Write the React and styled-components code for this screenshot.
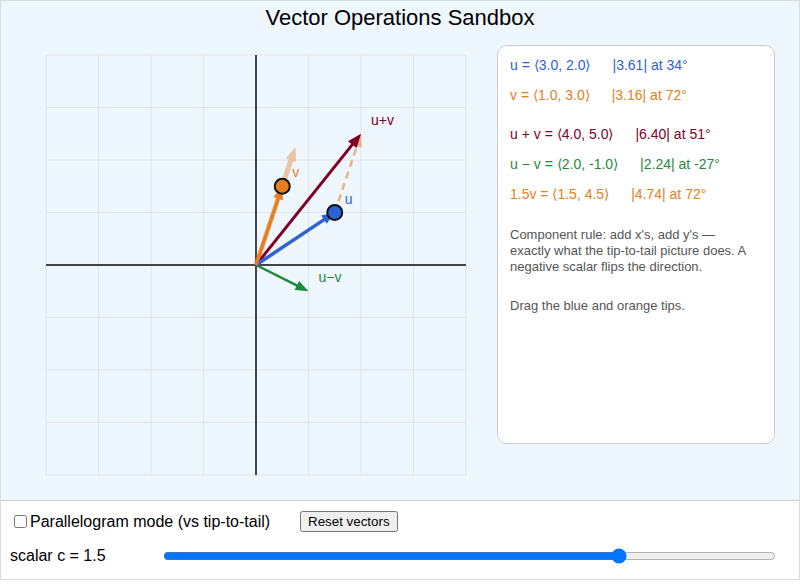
import React, { useState } from 'react'
import styled, { createGlobalStyle } from 'styled-components'

const GlobalStyle = createGlobalStyle`
  html, body {
    margin: 0;
    padding: 0;
    background: #fff;
  }
  body {
    font-family: "Liberation Sans", Arial, sans-serif;
  }
`

const COLORS = {
  u: '#2d62d4',
  v: '#e67e22',
  sum: '#800026',
  diff: '#1f8a3c',
  hint: '#555',
}

// plot: 440px square, grid inset by 10px, 8 cells of 2 units each
const SIZE = 440
const INSET = 10
const SCALE = 26.25
const CENTER = SIZE / 2

const toPx = ([x, y]) => [CENTER + x * SCALE, CENTER - y * SCALE]

const fmt = (n) => n.toFixed(1)
const mag = ([x, y]) => Math.hypot(x, y).toFixed(2)
const angle = ([x, y]) => Math.round((Math.atan2(y, x) * 180) / Math.PI)

const START_U = [3, 2]
const START_V = [1, 3]

const Arrow = ({ from, to, color, width = 3, head = 13, headWidth = 10, dash, opacity = 1 }) => {
  const dx = to[0] - from[0]
  const dy = to[1] - from[1]
  const len = Math.hypot(dx, dy) || 1
  const ux = dx / len
  const uy = dy / len
  const bx = to[0] - ux * head
  const by = to[1] - uy * head
  const px = -uy * (headWidth / 2)
  const py = ux * (headWidth / 2)
  const points = `${to[0]},${to[1]} ${bx + px},${by + py} ${bx - px},${by - py}`
  return (
    <g opacity={opacity}>
      <line
        x1={from[0]}
        y1={from[1]}
        x2={bx + ux * 2}
        y2={by + uy * 2}
        stroke={color}
        strokeWidth={width}
        strokeDasharray={dash}
      />
      <polygon points={points} fill={color} />
    </g>
  )
}

const Label = ({ at, color, children }) => (
  <text
    x={at[0] + 10}
    y={at[1] - 9}
    fill={color}
    fontSize="14"
    fontFamily='"Liberation Sans", Arial, sans-serif'
  >
    {children}
  </text>
)

const Plot = ({ u, v, c, parallelogram }) => {
  const sum = [u[0] + v[0], u[1] + v[1]]
  const diff = [u[0] - v[0], u[1] - v[1]]
  const scaled = [v[0] * c, v[1] * c]
  const o = toPx([0, 0])
  const pu = toPx(u)
  const pv = toPx(v)
  const ps = toPx(sum)
  const pd = toPx(diff)
  const pc = toPx(scaled)

  const lines = []
  for (let i = 0; i <= 8; i++) {
    const p = INSET + i * 52.5
    lines.push(<line key={`v${i}`} x1={p} y1={INSET} x2={p} y2={SIZE - INSET} />)
    lines.push(<line key={`h${i}`} x1={INSET} y1={p} x2={SIZE - INSET} y2={p} />)
  }

  return (
    <Canvas width={SIZE} height={SIZE} viewBox={`0 0 ${SIZE} ${SIZE}`}>
      <g stroke="#e2e4e6" strokeWidth="1">{lines}</g>
      <g stroke="#444" strokeWidth="2">
        <line x1={INSET} y1={CENTER} x2={SIZE - INSET} y2={CENTER} />
        <line x1={CENTER} y1={INSET} x2={CENTER} y2={SIZE - INSET} />
      </g>

      <Arrow from={o} to={pc} color={COLORS.v} width={5} head={14} headWidth={11} opacity={0.4} />
      <Arrow from={pu} to={ps} color={COLORS.v} width={2.5} dash="7 5" opacity={0.55} />
      {parallelogram && (
        <Arrow from={pv} to={ps} color={COLORS.u} width={2.5} dash="7 5" opacity={0.55} />
      )}
      <Arrow from={o} to={ps} color={COLORS.sum} width={3} head={14} headWidth={11} />
      <Arrow from={o} to={pd} color={COLORS.diff} width={2.5} head={13} headWidth={10} />
      <Arrow from={o} to={pu} color={COLORS.u} width={3.5} />
      <Arrow from={o} to={pv} color={COLORS.v} width={3.5} />

      <circle cx={pu[0]} cy={pu[1]} r="7.5" fill={COLORS.u} stroke="#111" strokeWidth="2" />
      <circle cx={pv[0]} cy={pv[1]} r="7.5" fill={COLORS.v} stroke="#111" strokeWidth="2" />

      <Label at={pu} color={COLORS.u}>u</Label>
      <Label at={pv} color={COLORS.v}>v</Label>
      <Label at={ps} color={COLORS.sum}>u+v</Label>
      <Label at={pd} color={COLORS.diff}>u−v</Label>
    </Canvas>
  )
}

const VectorLine = ({ name, vec, color }) => (
  <Readout color={color}>
    {name} = ⟨{fmt(vec[0])}, {fmt(vec[1])}⟩
    <Magnitude>|{mag(vec)}| at {angle(vec)}°</Magnitude>
  </Readout>
)

const App = () => {
  const [u, setU] = useState(START_U)
  const [v, setV] = useState(START_V)
  const [c, setC] = useState(1.5)
  const [parallelogram, setParallelogram] = useState(false)

  const sum = [u[0] + v[0], u[1] + v[1]]
  const diff = [u[0] - v[0], u[1] - v[1]]
  const scaled = [v[0] * c, v[1] * c]

  const reset = () => {
    setU(START_U)
    setV(START_V)
  }

  return (
    <Shell>
      <GlobalStyle />
      <Stage>
        <Title>Vector Operations Sandbox</Title>
        <Workspace>
          <Plot u={u} v={v} c={c} parallelogram={parallelogram} />
          <InfoPanel>
            <VectorLine name="u" vec={u} color={COLORS.u} />
            <VectorLine name="v" vec={v} color={COLORS.v} />
            <Results>
              <VectorLine name="u + v" vec={sum} color={COLORS.sum} />
              <VectorLine name="u − v" vec={diff} color={COLORS.diff} />
              <VectorLine name={`${c}v`} vec={scaled} color={COLORS.v} />
            </Results>
            <Note>
              Component rule: add x's, add y's — exactly what the tip-to-tail picture does. A
              negative scalar flips the direction.
            </Note>
            <Note spaced>Drag the blue and orange tips.</Note>
          </InfoPanel>
        </Workspace>
      </Stage>

      <Controls>
        <ControlRow>
          <CheckLabel>
            <input
              type="checkbox"
              checked={parallelogram}
              onChange={(e) => setParallelogram(e.target.checked)}
            />
            Parallelogram mode (vs tip-to-tail)
          </CheckLabel>
          <ResetButton onClick={reset}>Reset vectors</ResetButton>
        </ControlRow>
        <ControlRow slider>
          <ScalarLabel>scalar c = {c}</ScalarLabel>
          <Slider
            type="range"
            min="-3"
            max="3"
            step="0.1"
            value={c}
            onChange={(e) => setC(parseFloat(e.target.value))}
          />
        </ControlRow>
      </Controls>
    </Shell>
  )
}

const Shell = styled.div`
  box-sizing: border-box;
  width: 800px;
  height: 580px;
  border: 1px solid #d9dde2;
  display: flex;
  flex-direction: column;
`

const Stage = styled.div`
  flex: 1;
  background: #eef6fe;
  display: flex;
  flex-direction: column;
`

const Title = styled.h1`
  margin: 0;
  padding-top: 4px;
  height: 26px;
  line-height: 26px;
  text-align: center;
  font-size: 22px;
  font-weight: normal;
  color: #000;
`

const Workspace = styled.div`
  display: flex;
  align-items: flex-start;
  gap: 21px;
  padding-left: 35px;
  margin-top: 14px;
`

const Canvas = styled.svg`
  display: block;
  flex: none;
`

const InfoPanel = styled.div`
  box-sizing: border-box;
  width: 278px;
  height: 399px;
  background: #fff;
  border: 1px solid #ccc;
  border-radius: 10px;
  padding: 4px 24px 4px 12px;
`

const Readout = styled.div`
  color: ${(p) => p.color};
  font-size: 14px;
  line-height: 30px;
  white-space: nowrap;
`

const Magnitude = styled.span`
  margin-left: 22px;
`

const Results = styled.div`
  margin-top: 9px;
`

const Note = styled.p`
  margin: ${(p) => (p.spaced ? '23px' : '18px')} 0 0;
  font-size: 13px;
  line-height: 16px;
  color: ${COLORS.hint};
`

const Controls = styled.div`
  flex: none;
  background: #fff;
  border-top: 1px solid #d0d0d0;
  padding: 10px 21px 13px 9px;
`

const ControlRow = styled.div`
  display: flex;
  align-items: center;
  height: ${(p) => (p.slider ? '20px' : '21px')};
  margin-top: ${(p) => (p.slider ? '14px' : '0')};
  font-size: 16px;
  color: #000;
`

const CheckLabel = styled.label`
  display: flex;
  align-items: center;

  input {
    margin: 0 3px 0 4px;
    width: 13px;
    height: 13px;
  }
`

const ResetButton = styled.button`
  margin-left: 30px;
  font-family: "Liberation Sans", Arial, sans-serif;
  font-size: 13.33px;
`

const ScalarLabel = styled.span`
  width: 151px;
  flex: none;
`

const Slider = styled.input`
  flex: 1;
  margin: 0 2px;
`

export default App
